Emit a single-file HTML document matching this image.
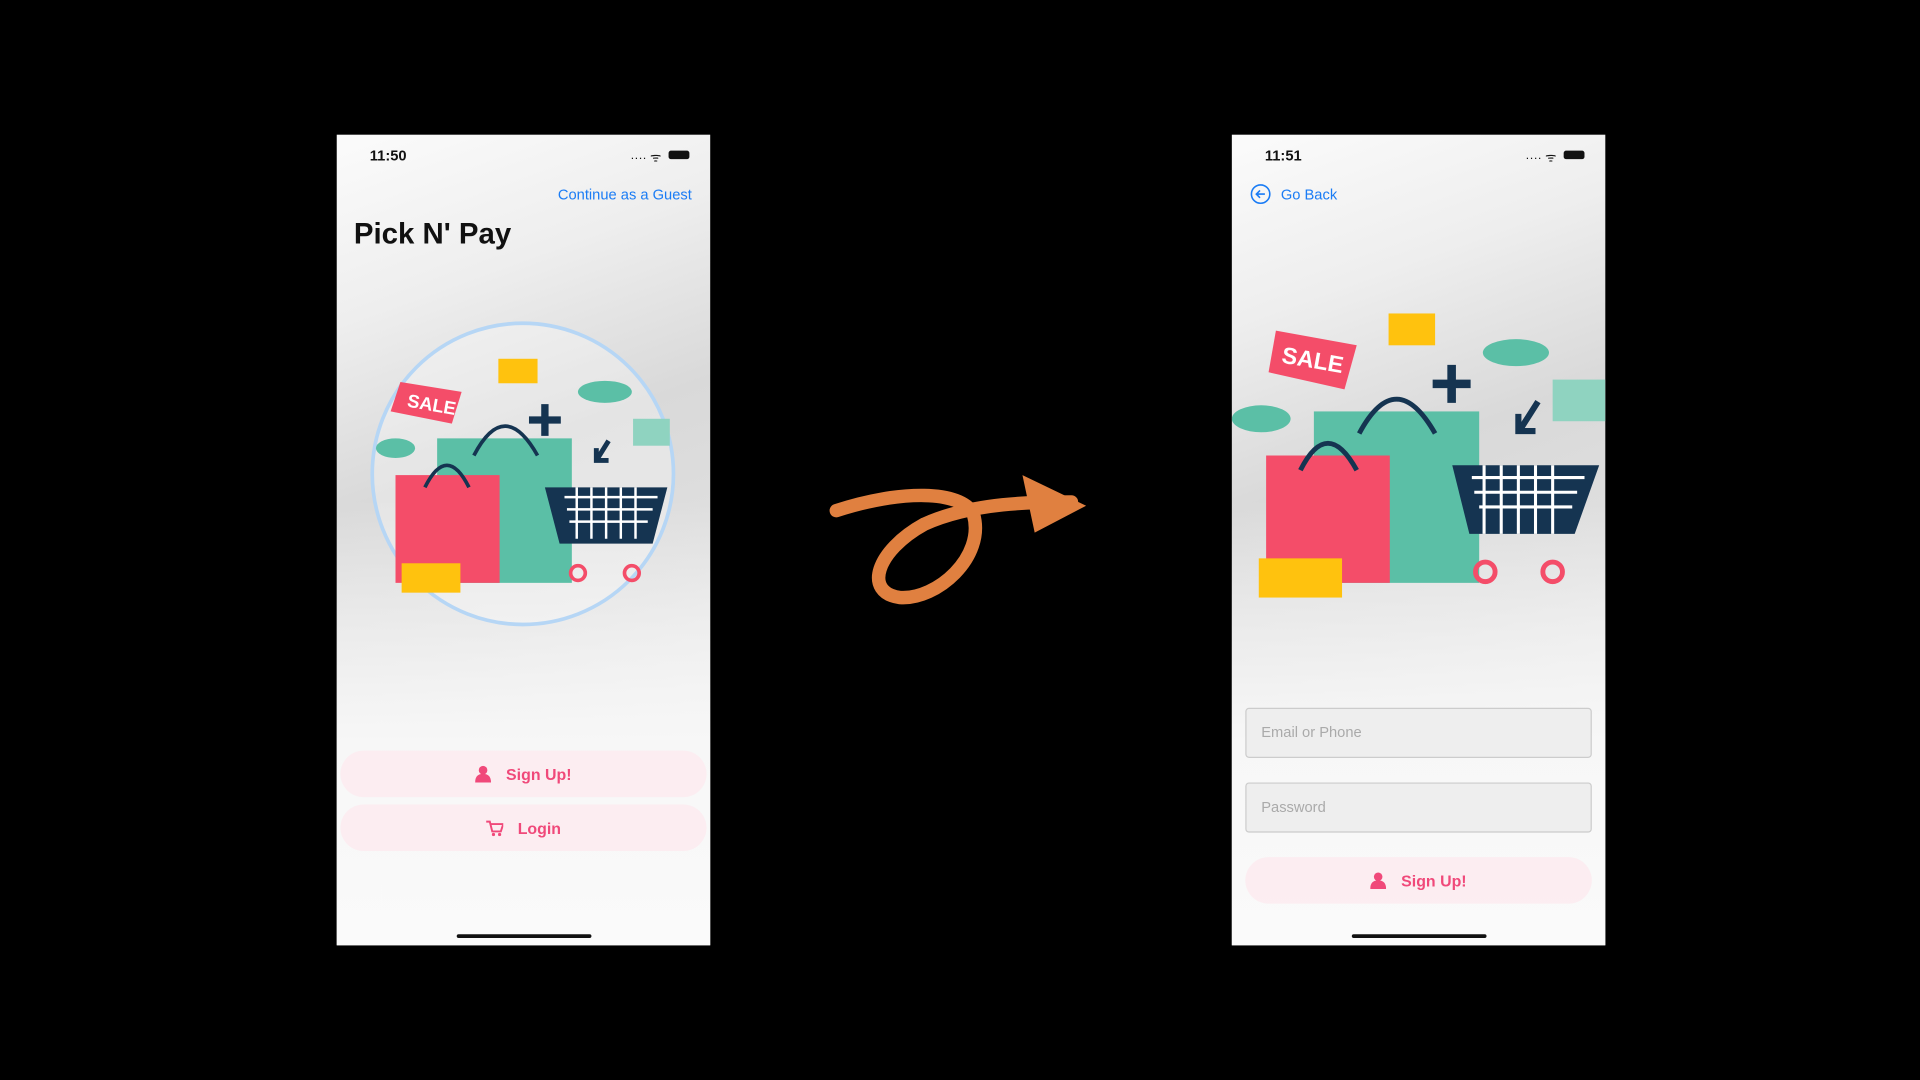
<!DOCTYPE html>
<html><head><meta charset="utf-8"><style>
html,body{margin:0;padding:0;background:#000;width:1920px;height:1080px;overflow:hidden}
#s{position:absolute;left:0;top:0;width:1568px;height:882px;transform:scale(1.22449);transform-origin:0 0;font-family:"Liberation Sans",sans-serif}
.ph{position:absolute;top:110px;width:305px;height:662px;overflow:hidden;
background:linear-gradient(180deg,rgba(250,250,250,0) 0%,rgba(250,250,250,0) 45%,#f7f7f7 75%,#fafafa 100%),
linear-gradient(160deg,#fbfbfb 0%,#eeeeee 20%,#d9d9d9 40%,#e0e0e0 60%,#ededed 80%);}
.t{position:absolute;top:10px;left:27px;font-size:12px;font-weight:bold;color:#111}
.bat{position:absolute;top:13px;right:17px;width:17px;height:7px;background:#111;border-radius:2px}
.wf{position:absolute;top:11px;right:40px;font-size:10px;color:#111}
.home{position:absolute;bottom:6px;left:98px;width:110px;height:3px;background:#111;border-radius:2px}
.btn{position:absolute;left:3px;width:299px;height:38px;border-radius:19px;background:rgba(253,232,238,.7);color:#f0497a;font-weight:bold;font-size:13px;display:flex;align-items:center;justify-content:center;gap:12px}
.in{position:absolute;left:11px;height:41px;border:1px solid #ccc;background:#eeeeee;border-radius:3px;color:#aaa;font-size:12px;line-height:39px;padding-left:12px;box-sizing:border-box;width:283px}
</style></head><body><div id="s">

<div class="ph" style="left:275px">
<div class="t">11:50</div><div class="wf">···· ᯤ</div><div class="bat"></div>
<div style="position:absolute;top:42px;right:15px;font-size:12px;color:#1a7cf5">Continue as a Guest</div>
<div style="position:absolute;top:68px;left:14px;font-size:24px;font-weight:bold;color:#111">Pick N' Pay</div>
<svg style="position:absolute;left:0;top:0" width="305" height="662">
<circle cx="152" cy="277" r="123" fill="rgba(255,255,255,.3)" stroke="#b6d6f5" stroke-width="3"/>
<rect x="82" y="248" width="110" height="118" fill="#5bbfa6"/>
<rect x="48" y="278" width="85" height="88" fill="#f44d69"/>
<path d="M72 288 q18-36 36 0 M112 262 q25-48 52 0" stroke="#153451" stroke-width="3" fill="none"/>
<path d="M170 288 h100 l-12 46 h-76z" fill="#153451"/>
<path d="M186 296 h76 M188 306 h70 M190 316 h64 M196 288 v42 M208 288 v42 M220 288 v42 M232 288 v42 M244 288 v42" stroke="#fff" stroke-width="2"/>
<circle cx="197" cy="358" r="6" fill="none" stroke="#f44d69" stroke-width="3"/>
<circle cx="241" cy="358" r="6" fill="none" stroke="#f44d69" stroke-width="3"/>
<rect x="53" y="350" width="48" height="24" fill="#ffc20e"/>
<path d="M52 202 l50 8 l-8 26 l-50-10z" fill="#f44d69"/><text x="57" y="222" fill="#fff" font-size="15" font-weight="bold" transform="rotate(10 57 222)">SALE</text>
<rect x="132" y="183" width="32" height="20" fill="#ffc20e"/>
<path d="M157 230 h10 v-10 h6 v10 h10 v6 h-10 v10 h-6 v-10 h-10z" fill="#153451"/>
<path d="M222 250 l-10 16 M212 256 v10 h10" stroke="#153451" stroke-width="4" fill="none"/>
<ellipse cx="219" cy="210" rx="22" ry="9" fill="#5bbfa6"/><ellipse cx="48" cy="256" rx="16" ry="8" fill="#5bbfa6"/>
<rect x="242" y="232" width="30" height="22" fill="#8fd3c0"/>
</svg>
<div class="btn" style="top:503px"><svg width="13" height="14"><circle cx="6.5" cy="4" r="3.5" fill="#f0497a"/><path d="M0 14 q0-7 6.5-7 q6.5 0 6.5 7z" fill="#f0497a"/></svg>Sign Up!</div>
<div class="btn" style="top:547px"><svg width="14" height="13"><path d="M0 1h3l2 8h7l2-6H4" stroke="#f0497a" stroke-width="1.6" fill="none"/><circle cx="6" cy="11.5" r="1.3" fill="#f0497a"/><circle cx="11" cy="11.5" r="1.3" fill="#f0497a"/></svg>Login</div>
<div class="home"></div>
</div>

<svg style="position:absolute;left:675px;top:380px" width="220" height="120">
<path d="M8 37 C60 20 110 20 120 40 C130 75 90 110 60 108 C30 104 40 70 80 48 C120 30 170 30 200 30" stroke="#e08040" stroke-width="11" fill="none" stroke-linecap="round"/>
<path d="M160 8 L212 33 L170 55 Z" fill="#e08040"/>
</svg>

<div class="ph" style="left:1006px">
<div class="t">11:51</div><div class="wf">···· ᯤ</div><div class="bat"></div>
<div style="position:absolute;top:40px;left:15px;font-size:12px;color:#1a7cf5;display:flex;align-items:center;gap:8px"><svg width="17" height="17"><circle cx="8.5" cy="8.5" r="7.5" fill="none" stroke="#1a7cf5" stroke-width="1.3"/><path d="M12 8.5H5M8 5.5L5 8.5L8 11.5" stroke="#1a7cf5" stroke-width="1.3" fill="none"/></svg>Go Back</div>
<svg style="position:absolute;left:0;top:0" width="305" height="662">
<rect x="67" y="226" width="135" height="140" fill="#5bbfa6"/>
<rect x="28" y="262" width="101" height="104" fill="#f44d69"/>
<path d="M56 274 q22-44 46 0 M104 244 q30-56 62 0" stroke="#153451" stroke-width="4" fill="none"/>
<path d="M180 270 h120 l-20 56 h-86z" fill="#153451"/>
<path d="M196 280 h92 M198 292 h84 M202 304 h76 M206 270 v56 M220 270 v56 M234 270 v56 M248 270 v56 M262 270 v56" stroke="#fff" stroke-width="2.5"/>
<circle cx="207" cy="357" r="8" fill="none" stroke="#f44d69" stroke-width="4"/>
<circle cx="262" cy="357" r="8" fill="none" stroke="#f44d69" stroke-width="4"/>
<rect x="22" y="346" width="68" height="32" fill="#ffc20e"/>
<path d="M36 160 l66 12 l-10 36 l-62-14z" fill="#f44d69"/><text x="40" y="186" fill="#fff" font-size="19" font-weight="bold" transform="rotate(10 40 186)">SALE</text>
<rect x="128" y="146" width="38" height="26" fill="#ffc20e"/>
<path d="M164 200 h12 v-12 h7 v12 h12 v7 h-12 v12 h-7 v-12 h-12z" fill="#153451"/>
<path d="M250 218 l-14 22 M234 228 v14 h14" stroke="#153451" stroke-width="5" fill="none"/>
<ellipse cx="232" cy="178" rx="27" ry="11" fill="#5bbfa6"/><ellipse cx="24" cy="232" rx="24" ry="11" fill="#5bbfa6"/>
<rect x="262" y="200" width="45" height="34" fill="#8fd3c0"/>
</svg>
<div class="in" style="top:468px">Email or Phone</div>
<div class="in" style="top:529px">Password</div>
<div class="btn" style="top:590px;left:11px;width:283px"><svg width="13" height="14"><circle cx="6.5" cy="4" r="3.5" fill="#f0497a"/><path d="M0 14 q0-7 6.5-7 q6.5 0 6.5 7z" fill="#f0497a"/></svg>Sign Up!</div>
<div class="home"></div>
</div>

</div></body></html>
